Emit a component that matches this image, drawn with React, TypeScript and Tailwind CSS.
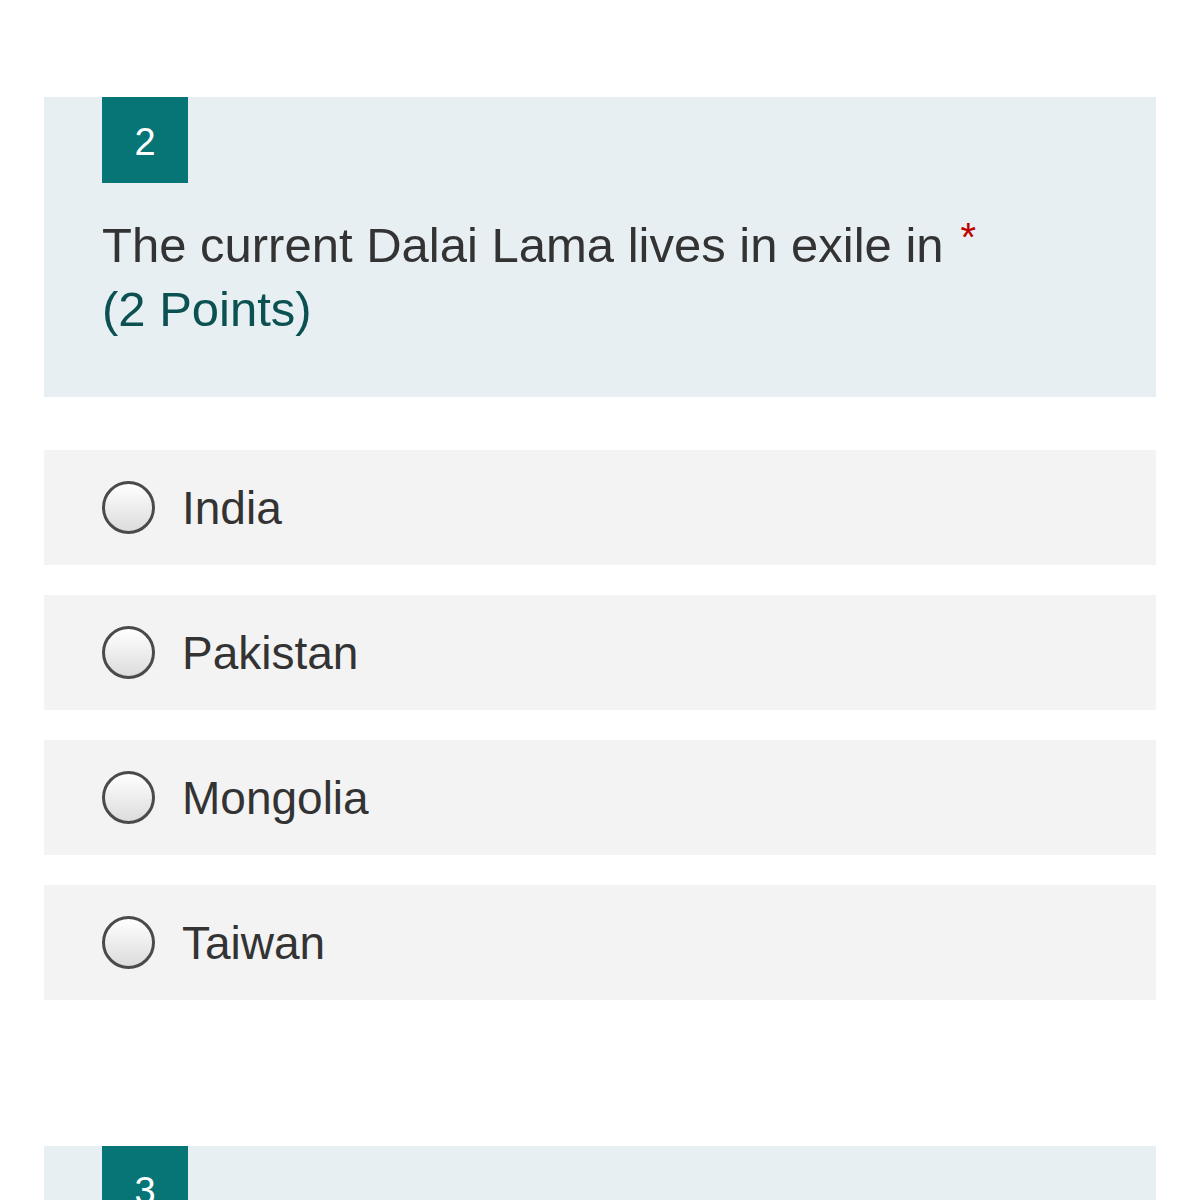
import React from 'react';

const OPTIONS = ['India', 'Pakistan', 'Mongolia', 'Taiwan'];

const FONT = { fontFamily: '"Liberation Sans", Arial, sans-serif' };

function Badge({ n }: { n: number }) {
  return (
    <div className="w-[86px] h-[86px] bg-[#077576] text-white flex items-center justify-center pt-[4px] text-[38px] leading-none">
      {n}
    </div>
  );
}

export default function App() {
  return (
    <div className="min-h-[1200px] h-[1200px] overflow-hidden bg-white pt-[97px] px-[44px]" style={FONT}>
      {/* QUESTION CARD */}
      <div className="bg-[#e7eff2] pl-[58px] pr-8 pb-[56px]">
        <Badge n={2} />
        <div className="mt-[30px] text-[49px] leading-[64px] text-[#333333]">
          <span>The current Dalai Lama lives in exile in</span>
          <span className="ml-[17px] text-[#c00000] text-[40px] align-top leading-[48px]">*</span>
          <div className="text-[#0b5152]">(2 Points)</div>
        </div>
      </div>

      {/* OPTIONS */}
      <div className="mt-[53px] flex flex-col gap-[30px]">
        {OPTIONS.map((opt) => (
          <div key={opt} className="h-[115px] bg-[#f3f3f3] flex items-center pl-[58px]">
            <span className="w-[53px] h-[53px] rounded-full border-[3px] border-[#4a4a4a] bg-gradient-to-b from-[#ffffff] to-[#dcdcdc] shrink-0" />
            <span className="ml-[27px] text-[46px] text-[#333333] leading-none">{opt}</span>
          </div>
        ))}
      </div>

      {/* NEXT CARD */}
      <div className="mt-[146px] bg-[#e7eff2] pl-[58px] h-[200px]">
        <Badge n={3} />
      </div>
    </div>
  );
}
